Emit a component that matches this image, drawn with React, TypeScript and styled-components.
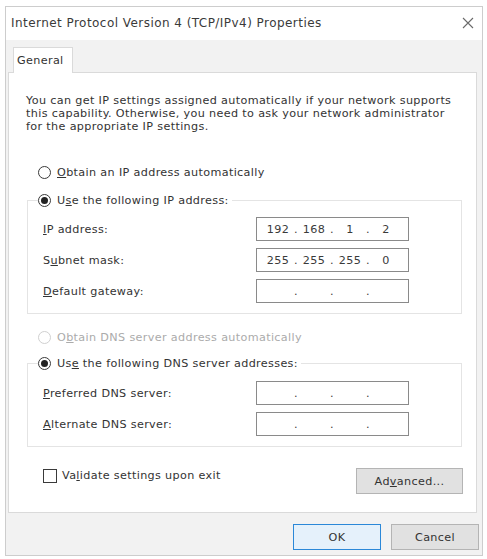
import React from "react";
import styled, { createGlobalStyle } from "styled-components";

const GlobalStyle = createGlobalStyle`
  body {
    margin: 0;
    background: #ffffff;
    font-family: "DejaVu Sans", "Noto Sans", sans-serif;
    font-size: 11.2px;
    letter-spacing: 0.35px;
    color: #333333;
  }
`;

const Window = styled.div`
  box-sizing: border-box;
  width: 478px;
  height: 550px;
  margin: 6px 0 0 5px;
  border: 1px solid #cdcdcd;
  display: flex;
  flex-direction: column;
  background: #f0f0f0;
`;

const TitleBar = styled.div`
  height: 31px;
  flex-shrink: 0;
  display: flex;
  align-items: center;
  justify-content: space-between;
  padding: 0 4px 2px 5px;
  background: #ffffff;
  font-size: 12px;
  letter-spacing: 0.45px;
  color: #3a3a3a;
`;

const CloseButton = styled.div`
  width: 16px;
  height: 16px;
  display: flex;
  align-items: center;
  justify-content: center;
  margin-right: 2px;
`;

const Body = styled.div`
  flex: 1;
  display: flex;
  flex-direction: column;
  padding: 0 5px 0 2px;
  background: #f2f2f2;
`;

const TabStrip = styled.div`
  height: 32px;
  display: flex;
  align-items: flex-end;
  padding-left: 5px;
`;

const Tab = styled.div`
  box-sizing: border-box;
  height: 26px;
  width: 60px;
  margin-bottom: -1px;
  border: 1px solid #dadada;
  border-bottom: none;
  background: #ffffff;
  display: flex;
  align-items: center;
  padding-left: 3px;
  position: relative;
  z-index: 1;
`;

const Page = styled.div`
  box-sizing: border-box;
  height: 441px;
  border: 1px solid #dadada;
  background: #ffffff;
  padding: 21px 15px 0 18px;
  display: flex;
  flex-direction: column;
`;

const Intro = styled.p`
  margin: 0 0 0 -1px;
  line-height: 13px;
  white-space: nowrap;
`;

const RadioRow = styled.label<{ $disabled?: boolean; $top?: number }>`
  display: flex;
  align-items: center;
  gap: 6px;
  height: 16px;
  padding-left: 11px;
  margin-top: ${(p) => (p.$top ? p.$top : 0)}px;
  color: ${(p) => (p.$disabled ? "#ababab" : "inherit")};
`;

const RadioDot = styled.span<{ $checked?: boolean; $disabled?: boolean }>`
  box-sizing: border-box;
  width: 13px;
  height: 13px;
  border-radius: 50%;
  border: 1px solid ${(p) => (p.$disabled ? "#d0d0d0" : "#3a3a3a")};
  display: flex;
  align-items: center;
  justify-content: center;
  background: #ffffff;

  &::after {
    content: "";
    width: 7px;
    height: 7px;
    border-radius: 50%;
    background: ${(p) => (p.$checked ? "#222222" : "transparent")};
  }
`;

const Group = styled.fieldset<{ $top: number; $pt: number; $pb: number }>`
  margin: ${(p) => p.$top}px 0 0 0;
  padding: ${(p) => p.$pt}px 0 ${(p) => p.$pb}px 10px;
  border: 1px solid #e4e4e4;
  width: 435px;
  box-sizing: border-box;
  min-width: 0;
`;

const Legend = styled.legend`
  padding: 0 3px 0 0;
  display: flex;
  align-items: center;
  gap: 6px;
  height: 16px;
`;

const Fields = styled.div`
  display: grid;
  grid-template-columns: 213px 153px;
  row-gap: 7px;
  margin-left: 5px;
  align-items: center;
`;

const IpBox = styled.div`
  box-sizing: border-box;
  height: 24px;
  border: 1px solid #8a8a8a;
  display: grid;
  grid-template-columns: 30px 6px 30px 6px 30px 6px 30px;
  align-items: center;
  padding-left: 6px;
  background: #ffffff;
  color: #3a3a3a;
`;

const Octet = styled.span`
  text-align: center;
`;

const Dot = styled.span`
  text-align: center;
`;

const BottomRow = styled.div`
  display: flex;
  justify-content: space-between;
  align-items: flex-start;
  margin-top: 21px;
  padding-left: 16px;
  margin-right: -2px;
`;

const CheckRow = styled.label`
  display: flex;
  align-items: center;
  gap: 5px;
  height: 15px;
`;

const CheckBox = styled.span`
  box-sizing: border-box;
  width: 14px;
  height: 14px;
  border: 1px solid #3a3a3a;
  background: #ffffff;
`;

const Button = styled.button<{ $primary?: boolean; $width: number }>`
  box-sizing: border-box;
  width: ${(p) => p.$width}px;
  height: 26px;
  border: 1px solid ${(p) => (p.$primary ? "#2b88d8" : "#b4b4b4")};
  background: ${(p) => (p.$primary ? "#e5f1fb" : "#e1e1e1")};
  font-family: inherit;
  font-size: 11.2px;
  letter-spacing: 0.35px;
  color: #333333;
  padding: 0;
`;

const Footer = styled.div`
  flex: 1;
  display: flex;
  justify-content: flex-end;
  align-items: flex-start;
  gap: 10px;
  padding: 11px 0 0 0;
  margin-right: -2px;
`;

const CloseIcon = () => (
  <svg width="12" height="12" viewBox="0 0 12 12">
    <path d="M1 1 L11 11 M11 1 L1 11" stroke="#6a6a6a" strokeWidth="1.1" fill="none" />
  </svg>
);

const IpField = ({ value }: { value?: string[] }) => {
  const parts = value ?? ["", "", "", ""];
  return (
    <IpBox>
      <Octet>{parts[0]}</Octet>
      <Dot>.</Dot>
      <Octet>{parts[1]}</Octet>
      <Dot>.</Dot>
      <Octet>{parts[2]}</Octet>
      <Dot>.</Dot>
      <Octet>{parts[3]}</Octet>
    </IpBox>
  );
};

const App = () => {
  return (
    <>
      <GlobalStyle />
      <Window>
        <TitleBar>
          <span>Internet Protocol Version 4 (TCP/IPv4) Properties</span>
          <CloseButton>
            <CloseIcon />
          </CloseButton>
        </TitleBar>
        <Body>
          <TabStrip>
            <Tab>General</Tab>
          </TabStrip>
          <Page>
            <Intro>
              You can get IP settings assigned automatically if your network supports
              <br />
              this capability. Otherwise, you need to ask your network administrator
              <br />
              for the appropriate IP settings.
            </Intro>

            <RadioRow $top={31}>
              <RadioDot />
              <span>
                <u>O</u>btain an IP address automatically
              </span>
            </RadioRow>

            <Group $top={12} $pt={9} $pb={10}>
              <Legend>
                <RadioDot $checked />
                <span>
                  U<u>s</u>e the following IP address:
                </span>
              </Legend>
              <Fields>
                <span>
                  <u>I</u>P address:
                </span>
                <IpField value={["192", "168", "1", "2"]} />
                <span>
                  S<u>u</u>bnet mask:
                </span>
                <IpField value={["255", "255", "255", "0"]} />
                <span>
                  <u>D</u>efault gateway:
                </span>
                <IpField />
              </Fields>
            </Group>

            <RadioRow $top={15} $disabled>
              <RadioDot $disabled />
              <span>
                O<u>b</u>tain DNS server address automatically
              </span>
            </RadioRow>

            <Group $top={10} $pt={10} $pb={10}>
              <Legend>
                <RadioDot $checked />
                <span>
                  Us<u>e</u> the following DNS server addresses:
                </span>
              </Legend>
              <Fields>
                <span>
                  <u>P</u>referred DNS server:
                </span>
                <IpField />
                <span>
                  <u>A</u>lternate DNS server:
                </span>
                <IpField />
              </Fields>
            </Group>

            <BottomRow>
              <CheckRow>
                <CheckBox />
                <span>
                  Va<u>l</u>idate settings upon exit
                </span>
              </CheckRow>
              <Button $width={107}>
                Ad<u>v</u>anced...
              </Button>
            </BottomRow>
          </Page>
          <Footer>
            <Button $primary $width={88}>
              OK
            </Button>
            <Button $width={88}>Cancel</Button>
          </Footer>
        </Body>
      </Window>
    </>
  );
};

export default App;
